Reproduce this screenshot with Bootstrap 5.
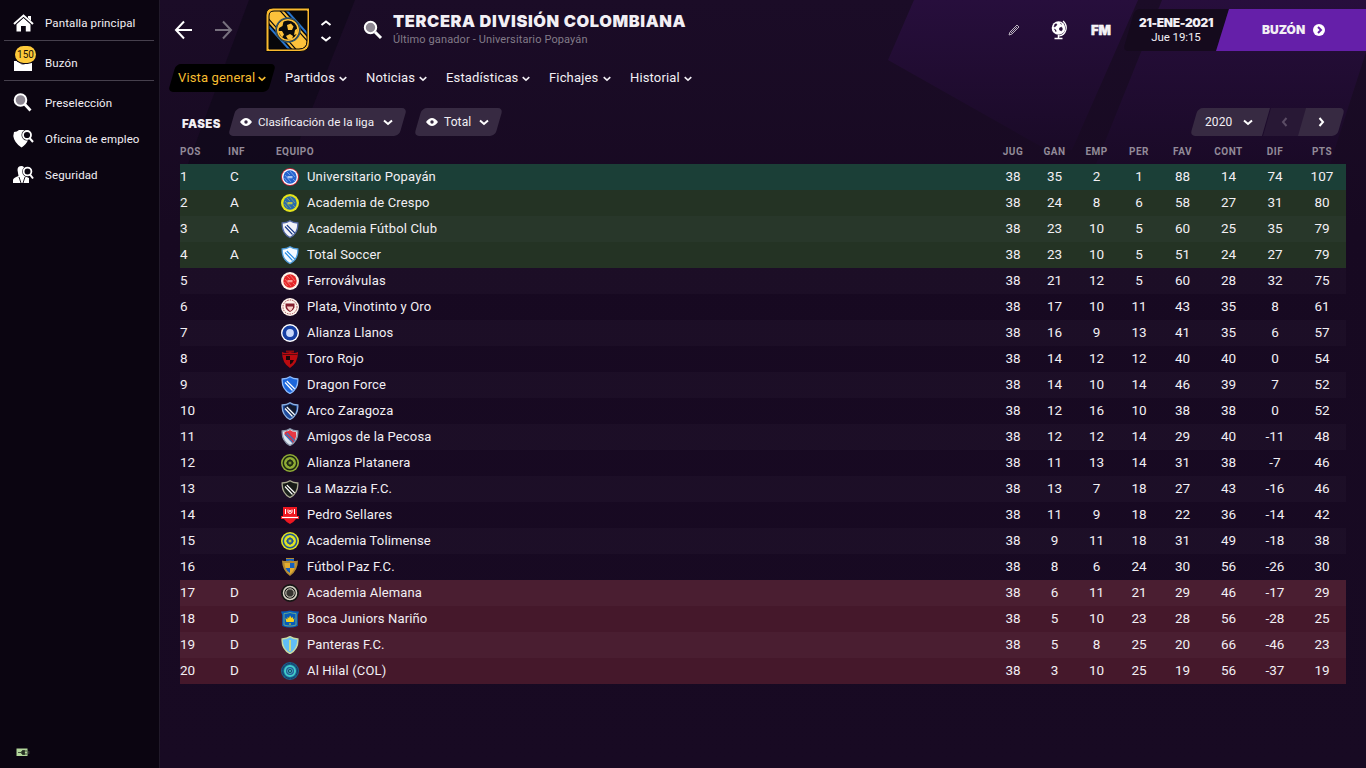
<!DOCTYPE html>
<html lang="es">
<head>
<meta charset="utf-8">
<title>Tercera División Colombiana</title>
<meta name="viewport" content="width=device-width, initial-scale=1">
<link rel="stylesheet" href="https://cdn.jsdelivr.net/npm/bootstrap@5.3.0/dist/css/bootstrap.min.css">
<style>
  body{width:1366px;height:768px;overflow:hidden;background:#180a23;color:#f2eff4;font-family:Roboto,"Liberation Sans",sans-serif;font-size:13px;line-height:20px}
  svg{display:block;flex:none}
  .backdrop{position:absolute;left:0;top:0;z-index:-1}
  .side{width:160px;background:#0b0511;border-right:1px solid #211a2a;flex:none}
  .side a{color:#f2eff4;font-size:11.5px;letter-spacing:.12px;height:36px;text-decoration:none}
  .side a.tall{height:39px}
  .side hr{margin:0 5px 0 4px;border:0;height:1px;background:#46404d;opacity:1}
  .side hr.first{margin-top:1px}
  .side .pic{width:45px;padding-left:13px;flex:none}
  .inbox-count{position:absolute;left:15px;top:5px;width:21px;height:17px;border-radius:9px;background:#fdc93a;color:#1b1408;box-shadow:0 0 0 1px #0b0511;font-size:10px;line-height:17px;letter-spacing:0}
  .topbar{height:60px}
  .heavy{font-family:Inter,"Liberation Sans",sans-serif;font-weight:900}
  .title{font-size:16.4px;line-height:20px;letter-spacing:.6px;margin-top:-2px}
  .sub{font-size:11px;line-height:14px;color:#827b88;letter-spacing:.12px;margin-top:2px}
  .tabs{height:28px;margin-top:4px;margin-left:8px}
  .tabs a{color:#f2eff4;text-decoration:none;letter-spacing:.15px;height:28px;padding-bottom:1px;flex:none}
  .slant{position:relative;z-index:0}
  .slant::before{content:"";position:absolute;inset:0 4px 0 3.5px;z-index:-1;background:#372a42;border-radius:5px;transform:skewX(-16deg)}
  .tabs .slant::before{background:#000}
  .tabs a.slant{color:#f7bd30}
  .slant.datebox::before{background:#150a1d;inset:0 6px;border-radius:5px 0 0 5px}
  .filters{height:28px;margin-top:16px;padding-left:22px}
  .filters .slant{height:28px;font-size:12px;letter-spacing:.1px}
  .filters .slant.sq-r::before{border-radius:5px 0 0 5px}
  .filters .slant.sq-l::before{border-radius:0 5px 5px 0}
  .filters .slant.sq::before{border-radius:0;background:#281835}
  .go{width:150px;height:42px;background:#651fa9;clip-path:polygon(13px 0,100% 0,100% 100%,0 100%)}
  .standings{width:1166px;margin:4px 0 0 20px;table-layout:fixed;border-collapse:collapse}
  .standings th{height:24px;padding:0;font-size:10px;line-height:12px;color:#928a98;font-weight:700;letter-spacing:.45px;white-space:nowrap}
  .standings td{height:26px;padding:0 0 1px;line-height:25px;white-space:nowrap;font-size:13.5px}
  .standings .team{font-size:13px;margin-left:8px;margin-top:-1px;letter-spacing:.15px}
  .standings .odd{background:rgba(255,255,255,.022)}
  .standings .champ{background:#1b3f37}
  .standings .promo{background:#243324}
  .standings .promo.odd{background:#28372a}
  .standings .down{background:#45182b}
  .standings .down.odd{background:#4a1e31}
</style>
</head>
<body class="d-flex position-relative">
<svg class="backdrop" width="1366" height="768">
  <defs><linearGradient id="glow" x1="0" y1="0" x2="0" y2="1"><stop offset="0" stop-color="#270e3c"/><stop offset="1" stop-color="#1a0a27"/></linearGradient>
  <linearGradient id="base" x1="0" y1="0" x2="0" y2="1"><stop offset="0" stop-color="#1b0c27"/><stop offset=".3" stop-color="#170921"/><stop offset="1" stop-color="#180a23"/></linearGradient></defs>
  <path fill="url(#base)" d="M160 0h1206v768H160z"/>
  <path fill="#10091a" d="M249 0h106L290 164H188z" opacity=".8"/>
  <path fill="url(#glow)" d="M914 0h224L1072 150 1040 146 888 60z"/>
  <path fill="url(#glow)" d="M1162 0h204v52L1330 164H1096z"/>
</svg>

<nav class="side d-flex flex-column h-100 position-relative">
  <a class="d-flex align-items-center tall" style="padding-top:6px" href="#"><span class="pic"><svg width="21" height="18" viewBox="0 0 21 18"><path d="M1 10L10.5 1.5 20 10" fill="none" stroke="#fff" stroke-width="2"/><path d="M15 2h3v5l-3-3z" fill="#fff"/><path d="M3.500 10l7-6.200 7 6.200v7.500h-4.700v-5.500H8v5.500H3.500z" fill="#fff"/><path d="M3 10.300l7.500-6.600 7.500 6.600" fill="none" stroke="#0b0511" stroke-width=".8"/></svg></span>Pantalla principal</a>
  <hr class="first">
  <a class="d-flex align-items-center position-relative tall pt-1" href="#"><span class="pic"><svg width="20" height="20" viewBox="0 0 20 20"><path d="M1 8h18v10H1z" fill="#fff"/><path d="M6.500 8h7c0 5-7 5-7 0z" fill="#77717d"/></svg></span>Buzón<span class="inbox-count text-center">150</span></a>
  <hr>
  <a class="d-flex align-items-center pt-1" href="#" style="margin-top:2px"><span class="pic"><svg width="20" height="20" viewBox="0 0 20 20"><circle cx="7.500" cy="7" r="5.800" fill="#8d8792" stroke="#fff" stroke-width="2"/><path d="M11.500 11l6 6.500" stroke="#fff" stroke-width="2.800"/></svg></span>Preselección</a>
  <a class="d-flex align-items-center pt-1" href="#"><span class="pic"><svg width="21" height="20" viewBox="0 0 21 20"><path d="M1 3q3 0 5-2h5l4 10q-2 5-6.500 7.500Q1 13.500.300 7z" fill="#fff"/><circle cx="14" cy="6" r="5.500" fill="#0b0511"/><circle cx="14" cy="6" r="4" fill="#0b0511" stroke="#fff" stroke-width="1.800"/><path d="M16.500 9l3.500 4" stroke="#fff" stroke-width="2"/></svg></span>Oficina de empleo</a>
  <a class="d-flex align-items-center pt-1" href="#"><span class="pic"><svg width="21" height="20" viewBox="0 0 21 20"><path d="M4.500 5q0-4 4-4 3 0 3 4v6l4.500 2v5H0v-3q0-2 5.500-4z" fill="#fff"/><path d="M6 12l2 6m4-6l-2 6" stroke="#0b0511" stroke-width=".9"/><circle cx="14.500" cy="6.500" r="5.300" fill="#0b0511"/><circle cx="14.500" cy="6.500" r="3.900" fill="#0b0511" stroke="#fff" stroke-width="1.800"/><path d="M17 9.500l3 4" stroke="#fff" stroke-width="2"/></svg></span>Seguridad</a>
  <div class="mt-auto" style="padding:0 0 11px 16px"><svg width="14" height="9" viewBox="0 0 14 9"><path d="M.5.500h11v7.500H.5z" fill="#b2d69b"/><path d="M2 4.500h3m3-1.500h3m-3 3h3M5 4.500l1.500-2h2v4h-2z" stroke="#263023" stroke-width=".8" fill="#263023"/><path d="M12 3h1.500v3H12z" fill="#303030"/></svg></div>
</nav>

<main class="flex-grow-1 h-100" style="min-width:0">
  <header class="topbar d-flex align-items-center">
    <svg width="60" height="20" viewBox="0 0 60 20" style="margin-left:14px" fill="none" stroke-width="2"><path stroke="#fff" d="M18 10H2m8-8.500L2 10l8 8.500"/><path stroke="#77707e" d="M41 10h16m-8-8.500l8 8.500-8 8.500"/></svg>
    <svg width="46" height="46" viewBox="0 0 46 46" style="margin-left:31px">
      <defs><clipPath id="inner"><path d="M9 4h33v30q0 8-8 8H4V9q0-5 5-5z"/></clipPath></defs>
      <path d="M8 1h36.500v34q0 9.500-9.500 9.500H1V8q0-7 7-7z" fill="#f9b92f" stroke="#07050a"/>
      <g clip-path="url(#inner)"><path d="M0 0h46v46H0z" fill="#07070a"/>
        <g transform="rotate(48 23 23)"><path d="M-12 10h70v26h-70z" fill="#2776cf"/><path d="M-12 12h70v22h-70z" fill="#07070a"/><path d="M-12 13.500h70v19h-70z" fill="#fdc23b"/><path d="M-12 16h70m-70 14h70" stroke="#07070a" stroke-width="1.200"/></g></g>
      <path d="M9 4h33v30q0 8-8 8H4V9q0-5 5-5z" fill="none" stroke="#07070a"/>
      <circle cx="23" cy="23" r="12" fill="#0b0b0d" stroke="#32556b" stroke-width="1.500"/><circle cx="23" cy="23" r="10.200" fill="#0b0b0d" stroke="#fdc23b" stroke-width="1.600"/>
      <g fill="#fdc23b"><path d="M22 18l4-1.500 2.500 3-1.500 3.500-4 0zM14 16.500l4.500-2-1 4.500-3.500 2zM13 24l4 0 2 3.500-2 3zM21 29l4-2 3 2-1 3.500-4 0zM30 23l3-2-1 6-3 1z"/></g></svg>
    <svg width="12" height="24" viewBox="0 0 12 24" style="margin-left:9px;margin-top:2px" fill="none" stroke="#fff" stroke-width="2"><path d="M1.500 6L6 2.500 10.500 6m-9 12L6 21.500l4.500-3.500"/></svg>
    <svg width="20" height="20" viewBox="0 0 20 20" style="margin-left:31px"><circle cx="7.500" cy="7.500" r="5.700" fill="#8d8792" stroke="#fff" stroke-width="2"/><path d="M12 12l6 6" stroke="#fff" stroke-width="3"/></svg>
    <div style="margin-left:10px"><div class="title heavy text-nowrap">TERCERA DIVISIÓN COLOMBIANA</div><div class="sub">Último ganador - Universitario Popayán</div></div>
    <div class="d-flex align-items-center ms-auto">
      <svg width="12" height="12" viewBox="0 0 12 12" style="margin-right:-1px"><path d="M1 11l1-3 7-7 2 2-7 7zM3 9l6-6" fill="none" stroke="#b8b1bd"/></svg>
      <svg width="18" height="20" viewBox="0 0 18 20" style="margin-left:31px"><circle cx="8.500" cy="8" r="6.800" fill="#fff"/><path d="M13 1c6 5 3 14-4 15" fill="none" stroke="#fff" stroke-width="1.200"/><path d="M5 4l2 0-1 2-2 1zM9.500 8l2-1 1 2-1 2-2-1zM4 9l2 1 0 2M10 3l2 1.500" fill="#28103a" stroke="#28103a" stroke-width=".6"/><path d="M8.500 15v3m-4 .5h8" stroke="#fff" stroke-width="1.500"/></svg>
      <div class="heavy" style="width:21px;margin-left:23px;font-size:13px;-webkit-text-stroke:.4px #fff">FM</div>
      <div class="slant datebox text-center d-flex flex-column justify-content-center" style="width:106px;height:42px;margin-left:11px"><div class="heavy text-nowrap" style="font-size:12px;line-height:14px;letter-spacing:-.35px">21-ENE-2021</div><div style="font-size:11.500px;line-height:14px;letter-spacing:-.1px">Jue 19:15</div></div>
      <div class="go heavy d-flex align-items-center" style="margin-left:-13px;font-size:12px;padding-left:46px">BUZÓN<svg width="12" height="12" viewBox="0 0 12 12" class="ms-2"><circle cx="6" cy="6" r="6" fill="#fff"/><path d="M5 3l3 3-3 3" fill="none" stroke="#651fa9" stroke-width="2"/></svg></div>
    </div>
  </header>

  <div class="tabs d-flex" id="tabs"></div>

  <div class="filters d-flex align-items-center">
    <div class="heavy" style="width:42px;font-size:11.500px;padding-top:3px;letter-spacing:.4px">FASES</div>
    <div class="slant d-flex align-items-center" style="width:178px;margin-left:4px;padding-left:12px"><svg width="12" height="8" viewBox="0 0 12 8"><path d="M0 4q6-8 12 0-6 8-12 0z" fill="#fff"/><circle cx="6" cy="4" r="1.700" fill="#372a42"/></svg><span class="text-nowrap" style="width:125px;padding-left:6px;font-size:11.700px;letter-spacing:0">Clasificación de la liga</span><svg width="10" height="7" viewBox="0 0 10 7" style="margin-left:6px"><path d="M1 1.500l4 3.500 4-3.500" fill="none" stroke="#fff" stroke-width="2"/></svg></div>
    <div class="slant d-flex align-items-center" style="width:88px;margin-left:8px;padding-left:12px"><svg width="12" height="8" viewBox="0 0 12 8"><path d="M0 4q6-8 12 0-6 8-12 0z" fill="#fff"/><circle cx="6" cy="4" r="1.700" fill="#372a42"/></svg><span style="width:35px;padding-left:6px">Total</span><svg width="10" height="7" viewBox="0 0 10 7" style="margin-left:6px"><path d="M1 1.500l4 3.500 4-3.500" fill="none" stroke="#fff" stroke-width="2"/></svg></div>
    <div class="d-flex ms-auto" style="margin-right:22px">
      <div class="slant sq-r d-flex align-items-center" style="width:79px;padding-left:15px">2020<svg width="10" height="7" viewBox="0 0 10 7" style="margin-left:11px"><path d="M1 1.500l4 3.500 4-3.500" fill="none" stroke="#fff" stroke-width="2"/></svg></div>
      <div class="slant sq d-flex align-items-center justify-content-center" style="width:43px;margin-left:-6px"><svg width="7" height="10" viewBox="0 0 7 10"><path d="M5.500 1L2 5l3.500 4" fill="none" stroke="#5b4d65" stroke-width="2"/></svg></div>
      <div class="slant sq-l d-flex align-items-center justify-content-center" style="width:46px;margin-left:-8px"><svg width="7" height="10" viewBox="0 0 7 10"><path d="M1.500 1L5 5 1.500 9" fill="none" stroke="#fff" stroke-width="2"/></svg></div>
    </div>
  </div>

  <table class="standings text-center">
    <colgroup><col style="width:42px"><col style="width:29px"><col style="width:25px"><col><col style="width:42px"><col style="width:41px"><col style="width:43px"><col style="width:42px"><col style="width:45px"><col style="width:47px"><col style="width:46px"><col style="width:48px"></colgroup>
    <thead><tr><th class="text-start">POS</th><th>INF</th><th></th><th class="text-start">EQUIPO</th><th>JUG</th><th>GAN</th><th>EMP</th><th>PER</th><th>FAV</th><th>CONT</th><th>DIF</th><th>PTS</th></tr></thead>
    <tbody id="rows"></tbody>
  </table>
</main>

<script src="https://cdn.jsdelivr.net/npm/bootstrap@5.3.0/dist/js/bootstrap.bundle.min.js"></script>
<script>
// Section tabs: label, total width, label width
document.getElementById('tabs').innerHTML = [['Vista general',107,77],['Partidos',81,51],['Noticias',80,50],['Estadísticas',103,73],['Fichajes',81,51],['Historial',81,51]]
  .map(([t,w,l],i)=>`<a href="#" class="d-flex align-items-center ${i?'':'slant'}" style="width:${w}px;padding-left:10px"><span class="text-nowrap" style="width:${l}px">${t}</span><svg width="8" height="6" viewBox="0 0 8 6" style="margin-left:3px;margin-top:2px"><path d="M.7 1.200L4 4.200l3.300-3" fill="none" stroke="currentColor" stroke-width="1.600"/></svg></a>`).join('');

// Crest shapes, 18px each
const svg = s => `<svg width="18" height="18" viewBox="0 0 18 18">${s}</svg>`;
const SH = 'M1.200 3Q6 3 9 .7 12 3 16.800 3 17.500 13 9 17.500 .5 13 1.200 3z';
const disc = (rim,edge,fill,mark) => svg(`<circle cx="9" cy="9" r="9" fill="${rim}"/><circle cx="9" cy="9" r="8" fill="${edge}"/><circle cx="9" cy="9" r="6.700" fill="${fill}"/><path d="M4 7l6 7M6 4l3 3m3 4l2 2M9 3l5 6M3.500 10l3 4" stroke="${mark}" stroke-width=".8" opacity=".55"/><path d="M6.500 8h5v2.300h-5z" fill="${mark}" opacity=".75"/>`);
const shield = (rim,fill,mark,top) => svg(`<path d="${SH}" fill="${fill}"/>${top?`<path d="M3 4Q7 4 9 2q2 2 6 2 1 4-1 8z" fill="${top}"/>`:''}<path d="M4.500 4.500l9 9.500" stroke="${mark[0]}" stroke-width="4"/><path d="M4 6.500l7.500 8M5.800 5l8 8" stroke="${mark[1]}" stroke-width="1.200"/><path d="${SH}" fill="none" stroke="${rim}" stroke-width="1.300"/>`);
const ring = (a,b,c,d) => svg(`<circle cx="9" cy="9" r="9" fill="${a}"/><circle cx="9" cy="9" r="7.600" fill="${b}"/><circle cx="9" cy="9" r="6" fill="${c}"/><circle cx="9" cy="9" r="3.900" fill="${d}"/>`);
const wheel = (a,b,c) => svg(`<circle cx="9" cy="9" r="9" fill="${a}"/><circle cx="9" cy="9" r="6.700" fill="none" stroke="${b}" stroke-width="1.500"/><circle cx="9" cy="9" r="5" fill="${c}"/><circle cx="9" cy="9" r="2.500" fill="${c}" stroke="${b}" stroke-width="1.400"/><path d="M9 5v8M5 9h8" stroke="${b}" stroke-width="1"/><circle cx="9" cy="9" r="1" fill="${c}"/>`);
const quarters = (a,b,c) => svg(`<path d="M5 0h8v3H5z" fill="${b}"/><path d="M5 .5h8" stroke="${a}"/><path d="M1 2.500q4 1 8 0 4 1 8 0 0 10-8 15.500Q1 12.500 1 2.500z" fill="${a}"/><path d="M3.500 5h11q0 7-5.500 11Q3.500 12 3.500 5z" fill="${c}"/><path d="M9 5h4.500v5H9zM4.500 10H9v5q-3.500-2-4.500-5z" fill="${b}"/>`);
const crests = [
  disc('#c52238','#fff','#2463cf','#d7e5ff'), disc('#e5e41c','#e5e41c','#2869ae','#e5df29'),
  shield('#5468a4','#f2f2f8',['#fff','#1c3b8b']), shield('#4e9cdc','#f2f9ff',['#fff','#278ee5']),
  disc('#fff4e9','#fff4e9','#e52627','#ffc5b9'),
  svg('<circle cx="9" cy="9" r="9" fill="#fff4ec"/><circle cx="9" cy="9" r="7" fill="none" stroke="#a65058" stroke-dasharray="1.500 1"/><path d="M4.500 5.500h9v4q-1 3-4.500 4.500Q5 12 4.500 9z" fill="#821c2c"/><path d="M6 8.500h6v1q-1 3-3 3.500Q6.500 11 6 9z" fill="#f6cfc7"/>'),
  ring('#fff','#153fa3','#153fa3','#c8d8fb'),
  svg('<path d="M5 .5h8v2H5z" fill="#8b0b10"/><path d="M1 2q4 2 8 0 4 2 8 0 0 11-8 16Q1 13 1 2z" fill="#b90b10"/><path d="M5 6h4v4H5zM9 10h4q-1 3-4 4.500z" fill="#1c0709"/><path d="M1.500 4.500h15" stroke="#5c090e"/>'),
  shield('#8dbcff','#1c66db',['#1c66db','#fff']), shield('#8db1e2','#1e4b9c',['#152548','#fff'],'#11182e'),
  shield('#8a97ab','#dce6f0',['#df2e3b','#397ac4'],'#e73944'), wheel('#91ad35','#1c2814','#91ad35'),
  shield('#aba992','#1a211b',['#111','#fff'],'#181a17'),
  svg('<path d="M2 1h14v9h2v3h-3q-2 3-6 5-4-2-6-5H0v-3h2z" fill="#ed1721"/><path d="M1 11.500h16" stroke="#fff" stroke-width="1.200"/><path d="M4.500 3v5M13.500 3v5M7 3.500v3q2 2 4 0v-3" stroke="#fff" stroke-width="1" fill="none"/><circle cx="9" cy="5" r="1" fill="#fff"/>'),
  wheel('#dfe422','#1f5599','#dfe422'),
  quarters('#b28832','#1560c1','#e3ac32'),
  svg('<circle cx="9" cy="9" r="9" fill="#161615"/><circle cx="9" cy="9" r="6.500" fill="none" stroke="#d7d3c5" stroke-width="1.500"/><circle cx="9" cy="9" r="4.200" fill="#35332f" stroke="#d7d3c5"/>'),
  svg('<path d="M0 1.500q5 0 9-1 4 1 9 1l-1.200 3.500v11q-4 1.500-7.800 1.500T1.200 16V5z" fill="#075cba"/><path d="M3 3.500q3 0 6-1 3 1 6 1V15q-3 1-6 1t-6-1z" fill="none" stroke="#66a58c"/><path d="M4.500 8l2 1.500V7l1.500 1 1-2.500L10.500 8 12 7v2.500L13.500 8l-.8 4H5.300zM8 13.500h2v1H8z" fill="#f6d01c"/>'),
  svg(`<path d="${SH}" fill="#61bdf7" stroke="#c6dba4" stroke-width="1.500"/><path d="M9 4v11" stroke="#c6d989" stroke-width="2"/>`),
  svg('<circle cx="9" cy="9" r="9" fill="#17638d"/><circle cx="9" cy="9" r="7.500" fill="none" stroke="#173b69" stroke-dasharray="5 1"/><circle cx="9" cy="9" r="5" fill="#28599b" stroke="#43ccca" stroke-width="2"/><circle cx="9" cy="9" r="2.500" fill="#173b69" stroke="#43ccca" stroke-width=".8"/><circle cx="9" cy="9" r="1" fill="#43ccca"/>')
];
const teams = `Universitario Popayán|35 2 1 88 14 74 107
Academia de Crespo|24 8 6 58 27 31 80
Academia Fútbol Club|23 10 5 60 25 35 79
Total Soccer|23 10 5 51 24 27 79
Ferroválvulas|21 12 5 60 28 32 75
Plata, Vinotinto y Oro|17 10 11 43 35 8 61
Alianza Llanos|16 9 13 41 35 6 57
Toro Rojo|14 12 12 40 40 0 54
Dragon Force|14 10 14 46 39 7 52
Arco Zaragoza|12 16 10 38 38 0 52
Amigos de la Pecosa|12 12 14 29 40 -11 48
Alianza Platanera|11 13 14 31 38 -7 46
La Mazzia F.C.|13 7 18 27 43 -16 46
Pedro Sellares|11 9 18 22 36 -14 42
Academia Tolimense|9 11 18 31 49 -18 38
Fútbol Paz F.C.|8 6 24 30 56 -26 30
Academia Alemana|6 11 21 29 46 -17 29
Boca Juniors Nariño|5 10 23 28 56 -28 25
Panteras F.C.|5 8 25 20 66 -46 23
Al Hilal (COL)|3 10 25 19 56 -37 19`.split('\n');
document.getElementById('rows').innerHTML = teams.map((line,i)=>{
  const [name,stats] = line.split('|');
  const zone = i===0?'champ':i<4?'promo':i>15?'down':'';
  const info = i===0?'C':i<4?'A':i>15?'D':'';
  return `<tr class="${zone} ${i%2===0?'odd':''}"><td class="text-start">${i+1}</td><td style="padding-right:4px">${info}</td><td></td><td class="pb-0"><div class="d-flex align-items-center" style="padding-left:5px;height:26px">${crests[i]}<span class="team">${name}</span></div></td><td>38</td>${stats.split(' ').map(v=>`<td>${v}</td>`).join('')}</tr>`;
}).join('');
</script>
</body>
</html>
